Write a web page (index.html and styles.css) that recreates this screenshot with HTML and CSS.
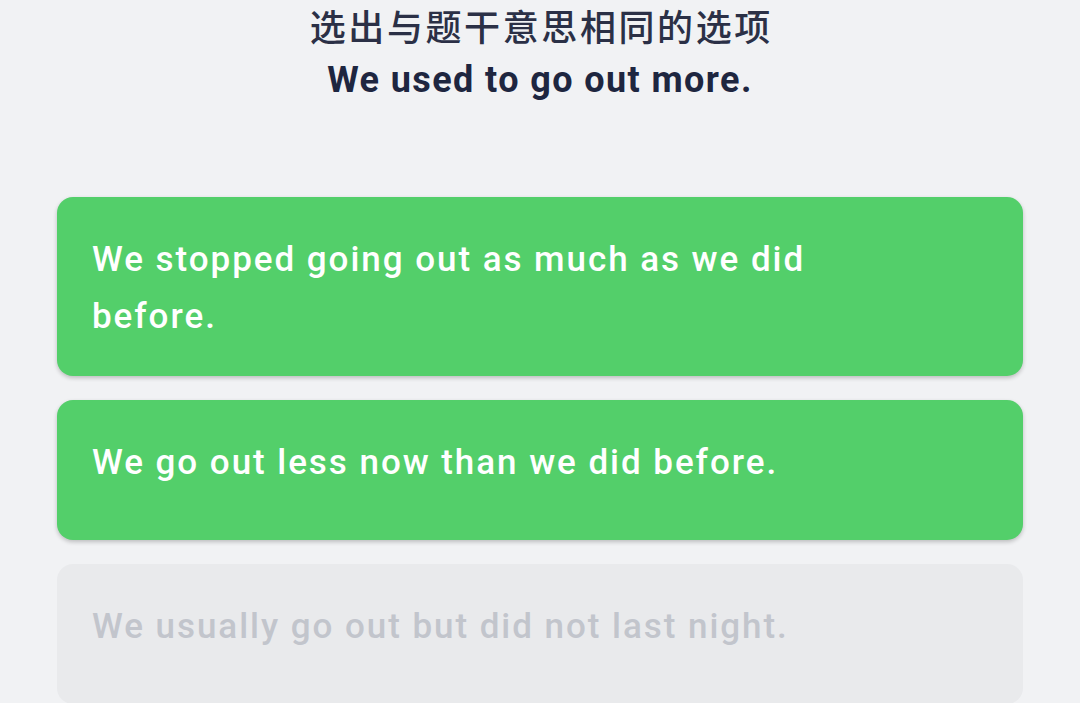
FILE: index.html
```html
<!DOCTYPE html>
<html lang="zh">
<head>
<meta charset="utf-8">
<link rel="stylesheet" href="styles.css">
</head>
<body>
<div class="page">
  <header class="head">
    <div class="prompt">选出与题干意思相同的选项</div>
    <div class="stem">We used to go out more.</div>
  </header>
  <div class="options">
    <div class="option correct">We stopped going out as much as we did before.</div>
    <div class="option correct">We go out less now than we did before.</div>
    <div class="option disabled">We usually go out but did not last night.</div>
  </div>
</div>
</body>
</html>
```
FILE: styles.css
```css
html, body {
  margin: 0;
  padding: 0;
  background: #f1f2f4;
}
body {
  font-family: Roboto, "Noto Sans CJK SC", sans-serif;
  overflow: hidden;
  height: 703px;
}
.page {
  padding: 0 57px 0 57px;
}
.head {
  text-align: center;
  padding-top: 3px;
  height: 197px;
  box-sizing: border-box;
}
.prompt {
  font-family: "Noto Sans CJK SC", sans-serif;
  font-size: 36px;
  font-weight: 500;
  color: #2b3046;
  line-height: 44px;
  letter-spacing: 2.6px;
  text-indent: 2.6px;
}
.stem {
  font-family: Roboto, sans-serif;
  font-size: 36px;
  font-weight: 700;
  color: #1e2640;
  line-height: 48px;
  letter-spacing: 1.4px;
  margin-top: 9px;
}
.options {
  display: flex;
  flex-direction: column;
  gap: 24px;
}
.option {
  min-height: 140px;
  box-sizing: border-box;
  border-radius: 16px;
  padding: 34px 140px 31px 35px;
  font-size: 35px;
  font-weight: 500;
  line-height: 57px;
  letter-spacing: 1.95px;
}
.correct {
  background: #53cf6a;
  color: #ffffff;
  box-shadow: 0 2px 4px rgba(0, 0, 0, 0.22);
}
.disabled {
  background: #e9eaec;
  color: #c2c5cc;
}
```
